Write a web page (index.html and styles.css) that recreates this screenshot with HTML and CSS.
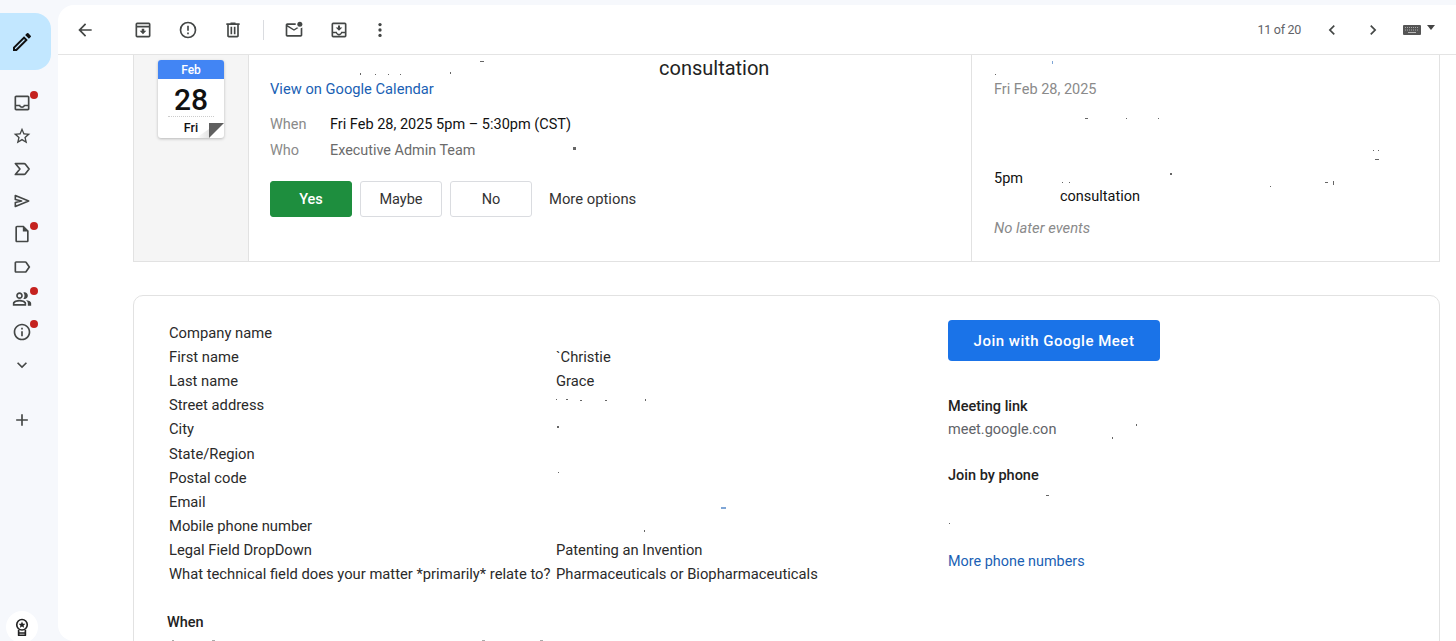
FILE: index.html
```html
<!DOCTYPE html>
<html lang="en">
<head>
<meta charset="utf-8">
<title>Mail</title>
<link rel="stylesheet" href="styles.css">
</head>
<body>
<div class="app">
  <aside class="side">
    <div class="compose"><svg class="ic pen" viewBox="0 0 24 24"><path d="M3 17.25V21h3.75L17.81 9.94l-3.75-3.75L3 17.25zM5.9 19H5v-.9l9.06-9.06.9.9L5.9 19zM20.71 7.04a1 1 0 0 0 0-1.41l-2.34-2.34a1 1 0 0 0-1.41 0l-1.83 1.83 3.75 3.75 1.83-1.83z"/></svg></div>
    <nav class="nav">
      <div class="nav-item"><svg class="ic" viewBox="0 0 24 24"><path d="M19 3H5c-1.1 0-2 .9-2 2v14c0 1.1.9 2 2 2h14c1.1 0 2-.9 2-2V5c0-1.1-.9-2-2-2zm0 16H5v-3h3.56c.69 1.19 1.97 2 3.45 2s2.75-.81 3.45-2H19v3zm0-5h-4.99c0 1.1-.9 2-2 2s-2-.9-2-2H5V5h14v9z"/></svg><i class="dot"></i></div>
      <div class="nav-item"><svg class="ic" viewBox="0 0 24 24"><path d="M22 9.24l-7.19-.62L12 2 9.19 8.63 2 9.24l5.46 4.73L5.82 21 12 17.27 18.18 21l-1.63-7.03L22 9.24zM12 15.4l-3.76 2.27 1-4.28-3.32-2.88 4.38-.38L12 6.1l1.71 4.04 4.38.38-3.32 2.88 1 4.28L12 15.4z"/></svg></div>
      <div class="nav-item"><svg class="ic" viewBox="0 0 24 24"><path class="st" d="M4 5.5h10.5a2 2 0 0 1 1.6.8l4.4 5.7-4.4 5.7a2 2 0 0 1-1.6.8H4L9.5 12z"/></svg></div>
      <div class="nav-item"><svg class="ic" viewBox="0 0 24 24"><path class="st" d="M4 5.5 20 12 4 18.5v-4.7l7.5-1.8L4 10.2z"/></svg></div>
      <div class="nav-item"><svg class="ic" viewBox="0 0 24 24"><path d="M14 2H6c-1.1 0-2 .9-2 2v16c0 1.1.9 2 2 2h12c1.1 0 2-.9 2-2V8l-6-6zm4 18H6V4h7v5h5v11z"/></svg><i class="dot"></i></div>
      <div class="nav-item"><svg class="ic" viewBox="0 0 24 24"><path d="M17.63 5.84C17.27 5.33 16.67 5 16 5L5 5.01C3.9 5.01 3 5.9 3 7v10c0 1.1.9 1.99 2 1.99L16 19c.67 0 1.27-.33 1.63-.84L22 12l-4.37-6.16zM16 17H5V7h11l3.55 5L16 17z"/></svg></div>
      <div class="nav-item"><svg class="ic" viewBox="0 0 24 24"><path d="M16.67 13.13C18.04 14.06 19 15.32 19 17v3h4v-3c0-2.18-3.57-3.47-6.33-3.87zM15 12c2.21 0 4-1.79 4-4s-1.79-4-4-4c-.47 0-.91.1-1.33.24C14.5 5.27 15 6.58 15 8s-.5 2.73-1.33 3.76c.42.14.86.24 1.33.24zM9 12c2.21 0 4-1.79 4-4s-1.79-4-4-4-4 1.79-4 4 1.79 4 4 4zm0-6c1.1 0 2 .9 2 2s-.9 2-2 2-2-.9-2-2 .9-2 2-2zM9 13c-2.67 0-8 1.34-8 4v3h16v-3c0-2.66-5.33-4-8-4zm6 5H3v-.99C3.2 16.29 6.3 15 9 15s5.8 1.29 6 2v1z"/></svg><i class="dot"></i></div>
      <div class="nav-item"><svg class="ic" viewBox="0 0 24 24"><path d="M11 7h2v2h-2zm0 4h2v6h-2zm1-9C6.48 2 2 6.48 2 12s4.48 10 10 10 10-4.48 10-10S17.52 2 12 2zm0 18c-4.41 0-8-3.59-8-8s3.59-8 8-8 8 3.59 8 8-3.59 8-8 8z"/></svg><i class="dot"></i></div>
      <div class="nav-item"><svg class="ic" viewBox="0 0 24 24"><path d="M16.59 8.59 12 13.17 7.41 8.59 6 10l6 6 6-6z"/></svg></div>
      <div class="nav-item add"><svg class="ic" viewBox="0 0 24 24"><path d="M19 13h-6v6h-2v-6H5v-2h6V5h2v6h6v2z"/></svg></div>
    </nav>
    <div class="award"><svg class="ic" viewBox="0 0 24 24"><circle class="st thick" cx="12" cy="9" r="7"/><path d="M12 4.5l1.3 3 3.2.3-2.4 2.1.7 3.1-2.8-1.7-2.8 1.7.7-3.1-2.4-2.1 3.2-.3z"/><path class="st thick" d="M7.5 15.5V23h9v-7.5M7.5 20h9"/></svg></div>
  </aside>

  <main class="panel">
    <header class="toolbar">
      <button class="tb back"><svg class="ic" viewBox="0 0 24 24"><path d="M20 11H7.83l5.59-5.59L12 4l-8 8 8 8 1.41-1.41L7.83 13H20v-2z"/></svg></button>
      <div class="tb-group wide">
        <button class="tb"><svg class="ic" viewBox="0 0 24 24"><path d="M5 3h14a2 2 0 0 1 2 2v14a2 2 0 0 1-2 2H5a2 2 0 0 1-2-2V5a2 2 0 0 1 2-2zm0 2v2h14V5H5zm0 4v10h14V9H5zm5.5 1.5h3V13H16l-4 4-4-4h2.5z"/></svg></button>
        <button class="tb"><svg class="ic" viewBox="0 0 24 24"><path d="M12 2a10 10 0 1 0 0 20 10 10 0 0 0 0-20zm0 18a8 8 0 1 1 0-16 8 8 0 0 1 0 16zM11 7h2v6h-2zm0 8h2v2h-2z"/></svg></button>
        <button class="tb"><svg class="ic" viewBox="0 0 24 24"><path d="M15 4V3H9v1H4v2h1v13c0 1.1.9 2 2 2h10c1.1 0 2-.9 2-2V6h1V4h-5zm2 15H7V6h10v13zM9 8h2v9H9zm4 0h2v9h-2z"/></svg></button>
      </div>
      <span class="vr"></span>
      <div class="tb-group tight">
        <button class="tb"><svg class="ic" viewBox="0 0 24 24"><path d="M22 8.98V18c0 1.1-.9 2-2 2H4c-1.1 0-2-.9-2-2V6c0-1.1.9-2 2-2h10.1c-.06.32-.1.66-.1 1s.04.68.1 1H4l8 5 3.67-2.29c.47.43 1.02.76 1.63.98L12 13 4 8v10h16V9.9c.74-.15 1.42-.48 2-.92z"/><circle cx="19" cy="5" r="3"/></svg></button>
        <button class="tb"><svg class="ic" viewBox="0 0 24 24"><path d="M5 3h14a2 2 0 0 1 2 2v14a2 2 0 0 1-2 2H5a2 2 0 0 1-2-2V5a2 2 0 0 1 2-2zm0 2v9h4.5c0 1.4 1.1 2.5 2.5 2.5s2.5-1.1 2.5-2.5H19V5H5zm0 11v3h14v-3h-3.3c-.7 1.2-2.1 2.5-3.7 2.5s-3-1.3-3.7-2.5H5z"/><path d="M10.8 6.5h2.4V9H16l-4 4-4-4h2.8z"/></svg></button>
        <button class="tb narrow"><svg class="ic" viewBox="0 0 24 24"><circle cx="12" cy="5.5" r="2"/><circle cx="12" cy="12" r="2"/><circle cx="12" cy="18.5" r="2"/></svg></button>
      </div>
      <div class="tb-right">
        <span class="count">11 of 20</span>
        <button class="tb"><svg class="ic" viewBox="0 0 24 24"><path d="M15.41 7.41 14 6l-6 6 6 6 1.41-1.41L10.83 12z"/></svg></button>
        <button class="tb"><svg class="ic" viewBox="0 0 24 24"><path d="M10 6 8.59 7.41 13.17 12l-4.58 4.59L10 18l6-6z"/></svg></button>
        <span class="kbd"><svg class="kb" viewBox="0 0 18 10"><rect width="18" height="10" rx="1" fill="#555"/><path d="M2 2.5h14M2 5h14" stroke="#aaa" stroke-dasharray="1 1"/><path d="M5 7.5h8" stroke="#bbb"/></svg><i class="caret"></i></span>
      </div>
    </header>

    <div class="scroll">
      <section class="invite">
        <div class="inv-cal">
          <div class="cal">
            <div class="cal-mon">Feb</div>
            <div class="cal-day">28</div>
            <div class="cal-wd">Fri</div>
            <i class="curl"></i>
            <i class="fold"></i>
          </div>
        </div>
        <div class="inv-main">
          <div class="inv-title">consultation</div>
          <a class="link">View on Google Calendar</a>
          <div class="inv-row first"><span class="inv-k">When</span><span class="inv-v">Fri Feb 28, 2025 5pm – 5:30pm (CST)</span></div>
          <div class="inv-row"><span class="inv-k">Who</span><span class="inv-g">Executive Admin Team</span></div>
          <div class="inv-btns">
            <span class="btn yes">Yes</span>
            <span class="btn">Maybe</span>
            <span class="btn">No</span>
            <span class="more">More options</span>
          </div>
        </div>
        <div class="inv-agenda">
          <div class="ag-date">Fri Feb 28, 2025</div>
          <div class="ag-ev"><span class="ag-t">5pm</span><span class="ag-n">consultation</span></div>
          <div class="ag-none">No later events</div>
        </div>
      </section>

      <section class="desc">
        <div class="desc-left">
          <div class="kv"><span>Company name</span><span></span></div>
          <div class="kv"><span>First name</span><span>`Christie</span></div>
          <div class="kv"><span>Last name</span><span>Grace</span></div>
          <div class="kv"><span>Street address</span><span></span></div>
          <div class="kv"><span>City</span><span></span></div>
          <div class="kv"><span>State/Region</span><span></span></div>
          <div class="kv"><span>Postal code</span><span></span></div>
          <div class="kv"><span>Email</span><span></span></div>
          <div class="kv"><span>Mobile phone number</span><span></span></div>
          <div class="kv"><span>Legal Field DropDown</span><span>Patenting an Invention</span></div>
          <div class="kv"><span>What technical field does your matter *primarily* relate to?</span><span>Pharmaceuticals or Biopharmaceuticals</span></div>
          <h4 class="when">When</h4>
        </div>
        <div class="desc-right">
          <div class="join">Join with Google Meet</div>
          <h4 class="h-link">Meeting link</h4>
          <div class="meet">meet.google.con</div>
          <h4 class="h-phone">Join by phone</h4>
          <a class="link phones">More phone numbers</a>
        </div>
      </section>
    </div>
  </main>
</div>
<svg class="specks" viewBox="0 0 1456 641" aria-hidden="true"><path d="M360 73h1v2h-1zM375 74h1v1h-1zM388 74h1v1h-1zM400 74h1v1h-1zM450 72h1v2h-1zM480 61h4v1h-4zM573 147h3v3h-3zM556 399h1v1h-1zM566 399h2v1h-2zM580 400h2v1h-2zM605 400h2v1h-2zM645 399h1v2h-1zM557 426h2v2h-2zM558 472h1v1h-1zM644 530h1v2h-1zM1112 437h1v2h-1zM1136 424h1v2h-1zM1046 495h3v1h-3zM949 523h1v1h-1zM995 74h1v1h-1zM1085 118h3v1h-3zM1126 118h1v1h-1zM1158 118h1v1h-1zM1373 150h1v1h-1zM1378 150h1v1h-1zM1375 159h4v1h-4zM1062 182h1v1h-1zM1069 182h1v1h-1zM1170 173h2v2h-2zM1270 186h1v1h-1zM1325 182h3v1h-3zM1333 181h1v4h-1z" fill="#666"/><path d="M172 640h2v1h-2zM212 640h3v1h-3zM482 640h3v1h-3zM540 640h3v1h-3z" fill="#aaa"/><path d="M721 507h5v2h-5zM1052 61h1v3h-1z" fill="#7fa6d6"/></svg>
</body>
</html>
```

FILE: styles.css
```css
* { box-sizing: border-box; }
html, body { margin: 0; height: 100%; overflow: hidden; }
body { background: #f6f8fc; color: #222; font-family: Roboto, "Liberation Sans", sans-serif; font-size: 14.5px; }
.app { display: flex; height: 641px; position: relative; }

.ic { width: 20px; height: 20px; fill: #444746; display: block; }
.st { fill: none; stroke: #444746; stroke-width: 2; stroke-linejoin: round; }
.thick { stroke: #222; stroke-width: 2.2; }

.side { width: 58px; flex: none; position: relative; padding-top: 13px; }
.compose { width: 51px; height: 57px; background: #c2e7ff; border-radius: 0 16px 16px 0; display: flex; align-items: center; justify-content: center; padding-right: 7px; }
.pen { width: 24px; height: 24px; fill: #111; }
.nav { margin-top: 17px; width: 44px; }
.nav-item { height: 32.7px; display: flex; align-items: center; justify-content: center; position: relative; }
.nav-item.add { margin-top: 22px; }
.dot { position: absolute; left: 30px; top: 4px; width: 8px; height: 8px; border-radius: 50%; background: #c5221f; }
.award { position: absolute; left: 6px; top: 611px; width: 32px; height: 32px; border-radius: 50%; background: #fff; display: flex; align-items: center; justify-content: center; }
.award .ic { width: 18px; height: 18px; fill: #222; }

.panel { flex: 1; min-width: 0; margin-top: 5px; background: #fff; border-radius: 16px 0 0 16px; display: flex; flex-direction: column; overflow: hidden; }
.toolbar { height: 50px; flex: none; display: flex; align-items: center; border-bottom: 1px solid #e4e4e4; padding-left: 6px; }
.tb { width: 41px; height: 41px; padding: 0; border: 0; background: none; display: flex; align-items: center; justify-content: center; flex: none; }
.tb-group { display: flex; }
.tb-group.wide { margin-left: 15px; }
.tb-group.wide .tb { width: 45px; }
.vr { width: 1px; height: 20px; background: #dadce0; margin: 0 9px 0 8px; }
.tb-group.tight .tb:nth-child(1) { width: 41px; }
.tb-group.tight .tb:nth-child(2) { width: 49px; }
.tb-group.tight .tb.narrow { width: 33px; }
.tb-right { margin-left: auto; display: flex; align-items: center; }
.count { font-size: 12.5px; color: #5f6368; margin-right: 10px; letter-spacing: -.3px; }
.kbd { display: flex; align-items: center; margin-left: 10px; margin-right: 21px; }
.kb { width: 18px; height: 10px; }
.caret { width: 0; height: 0; border: 4.5px solid transparent; border-top: 5px solid #444; border-bottom: 0; margin-left: 6px; margin-top: -5px; }

.scroll { flex: 1; min-height: 0; padding: 0 16px 0 75px; }
.invite { height: 207px; display: flex; border: 1px solid #e2e2e2; border-top: 0; }
.inv-cal { width: 115px; flex: none; background: #f5f5f5; border-right: 1px solid #e2e2e2; padding: 5px 0 0 24px; }
.cal { width: 66px; height: 78px; background: #fff; border-radius: 3px; box-shadow: 0 1px 3px rgba(0,0,0,.25); position: relative; text-align: center; }
.cal-mon { height: 19px; background: #4285f4; color: #fff; font-size: 12px; font-weight: 500; line-height: 20px; border-radius: 3px 3px 0 0; }
.cal-day { font-size: 30px; font-weight: 500; line-height: 41px; color: #111; margin-bottom: -4px; }
.cal-wd { font-size: 12.5px; font-weight: 500; line-height: 22px; color: #111; margin: 0 10px; border-top: 1px dotted #ccc; }
.fold { position: absolute; right: 0; bottom: 0; width: 15px; height: 15px; background: #5f5f5f; clip-path: polygon(0 0, 100% 0, 0 100%); }
.curl { position: absolute; right: 15px; bottom: 0; width: 13px; height: 9px; background: linear-gradient(90deg, #fff, #e4e4e4); clip-path: polygon(100% 0, 100% 100%, 0 100%); }

.inv-main { width: 723px; flex: none; padding-left: 21px; border-right: 1px solid #e2e2e2; }
.inv-title { height: 24px; padding-left: 389px; font-size: 20px; line-height: 26px; color: #222; }
.link { display: block; color: #1a5fb4; line-height: 20px; font-size: 14.7px; }
.inv-row { display: flex; line-height: 20px; margin-top: 6px; }
.inv-row.first { margin-top: 16px; }
.inv-k { width: 60px; color: #8a8a8a; }
.inv-v { color: #111; }
.inv-g { color: #6b6b6b; font-size: 14.4px; }
.inv-btns { display: flex; align-items: center; margin-top: 20px; }
.btn { width: 82px; height: 36px; margin-right: 8px; border: 1px solid #dadce0; border-radius: 3px; display: flex; align-items: center; justify-content: center; color: #333; }
.btn.yes { background: #1e8e3e; border-color: #1e8e3e; color: #fff; font-weight: 500; }
.more { margin-left: 9px; color: #333; font-size: 14.8px; }

.inv-agenda { flex: 1; padding: 25px 0 0 22px; }
.ag-date { color: #8a8a8a; line-height: 20px; }
.ag-ev { display: flex; margin-top: 70px; line-height: 18px; color: #111; }
.ag-t { width: 66px; }
.ag-n { padding-top: 18px; }
.ag-none { margin-top: 12px; line-height: 20px; font-style: italic; color: #8a8a8a; font-size: 14.8px; }

.desc { margin-top: 33px; height: 400px; border: 1px solid #e2e2e2; border-radius: 10px 10px 0 0; padding: 25px 0 0 35px; display: flex; }
.desc-left { width: 779px; flex: none; }
.kv { display: grid; grid-template-columns: 387px auto; line-height: 24.12px; height: 24.12px; color: #2a2a2a; white-space: nowrap; font-size: 14.75px; }
h4 { margin: 0; font-weight: 500; color: #222; font-size: 14.5px; line-height: 20px; }
.when { margin: 27px 0 0 -2px; }
.join { width: 212px; height: 41px; background: #1a73e8; color: #fff; font-weight: 500; font-size: 15px; border-radius: 4px; display: flex; align-items: center; justify-content: center; letter-spacing: .5px; margin-top: -1px; }
.h-link { margin-top: 36px; }
.meet { margin-top: 3px; line-height: 20px; color: #5f6368; white-space: nowrap; font-size: 14.5px; }
.h-phone { margin-top: 26px; }
.phones { margin-top: 66px; font-size: 14.4px; }

.specks { position: absolute; left: 0; top: 0; width: 1456px; height: 641px; pointer-events: none; }
```
